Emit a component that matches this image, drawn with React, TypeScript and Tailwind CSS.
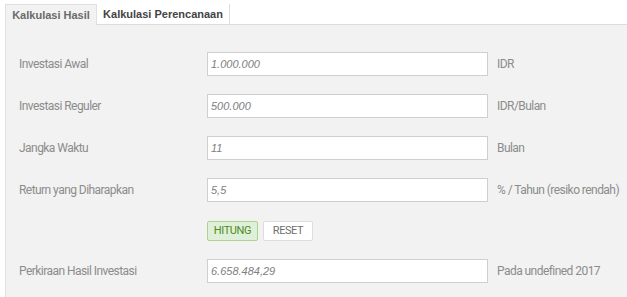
import React from "react";

const rows = [
  { label: "Investasi Awal", value: "1.000.000", unit: "IDR" },
  { label: "Investasi Reguler", value: "500.000", unit: "IDR/Bulan" },
  { label: "Jangka Waktu", value: "11", unit: "Bulan" },
  { label: "Return yang Diharapkan", value: "5,5", unit: "% / Tahun (resiko rendah)" },
];

function Row({ label, value, unit }: { label: string; value: string; unit: string }) {
  return (
    <div className="flex items-center h-[24px]">
      <div className="w-[201px] shrink-0 pl-[13px] text-[12px] tracking-[-0.55px] text-[#8c8c8c] [font-family:Roboto,sans-serif]">{label}</div>
      <div className="w-[281px] shrink-0 h-[24px] bg-white border border-[#cfcfcf] flex items-center px-[3px] text-[11px] italic text-[#808080] [font-family:'Liberation_Sans',Arial,sans-serif]">
        {value}
      </div>
      <div className="pl-[9px] whitespace-nowrap text-[12px] tracking-[-0.55px] text-[#8c8c8c] [font-family:Roboto,sans-serif]">{unit}</div>
    </div>
  );
}

export default function App() {
  return (
    <div className="w-[627px] h-[297px] bg-white overflow-hidden">
      <div className="pt-[4px] pl-[5px] flex h-[25px]">
        <div className="w-[92px] h-[21px] bg-[#f2f2f2] border-l border-t border-r border-[#e0e0e0] flex items-center justify-center text-[11px] font-bold text-[#6a6a6a] [font-family:'Liberation_Sans',Arial,sans-serif]">
          Kalkulasi Hasil
        </div>
        <div className="w-[133px] h-[21px] bg-white border-r border-b border-[#dcdcdc] flex items-center justify-center text-[11px] font-bold text-[#444] [font-family:'Liberation_Sans',Arial,sans-serif]">
          Kalkulasi Perencanaan
        </div>
        <div className="flex-1 h-[21px] border-b border-[#dcdcdc]"></div>
      </div>
      <div className="ml-[5px] h-[272px] bg-[#f2f2f2] border-l border-[#e0e0e0] pt-[27px] flex flex-col gap-[18px]">
        {rows.map((r) => (
          <Row key={r.label} {...r} />
        ))}
        <div className="flex items-center h-[20px] mt-[1px] pl-[201px] gap-[5px]">
          <div className="w-[51px] h-[20px] bg-[#dff0d8] border border-[#a9d38f] rounded-[2px] flex items-center justify-center text-[11px] tracking-[-0.4px] text-[#4f8a1e] [font-family:Roboto,sans-serif]">
            HITUNG
          </div>
          <div className="w-[50px] h-[20px] bg-white border border-[#dddddd] rounded-[2px] flex items-center justify-center text-[11px] tracking-[-0.4px] text-[#6f6f6f] [font-family:Roboto,sans-serif]">
            RESET
          </div>
        </div>
        <Row label="Perkiraan Hasil Investasi" value="6.658.484,29" unit="Pada undefined 2017" />
      </div>
    </div>
  );
}
